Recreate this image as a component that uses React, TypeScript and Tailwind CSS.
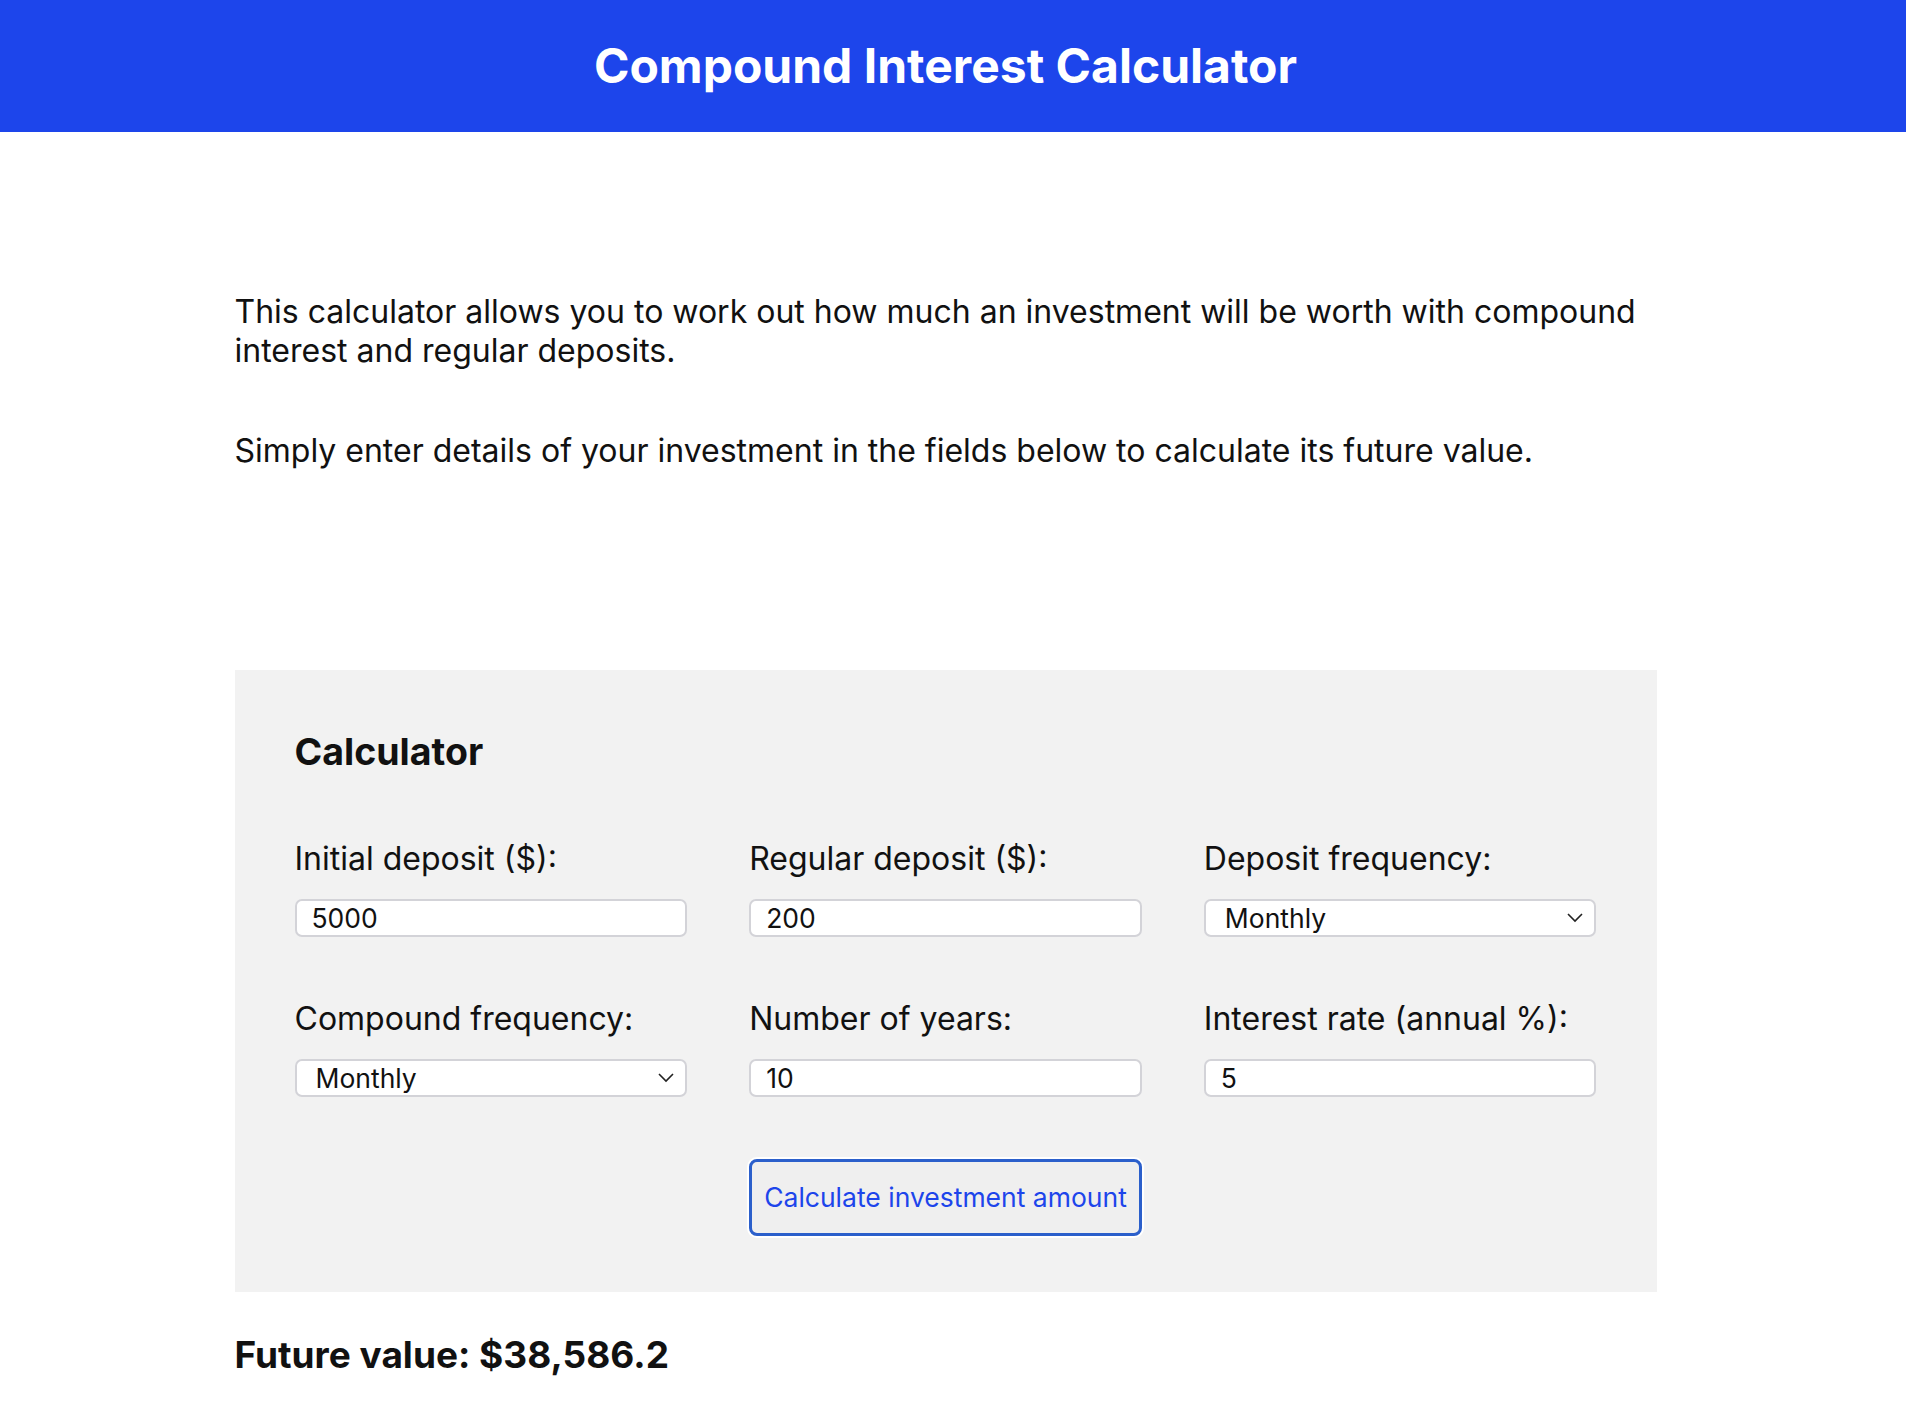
import React from "react";

const font = { fontFamily: "Inter, 'Noto Sans', sans-serif" };

const Field: React.FunctionComponent<{ label: string; value: string; select?: boolean }> = ({ label, value, select }) => (
    <div className="flex flex-col">
        <label className="text-[32px] leading-[39px] text-[#111]">{label}</label>
        {select ? (
            <div className="relative mt-[21px]">
                <select
                    defaultValue={value}
                    className="w-full h-[38px] appearance-none rounded-[7px] border-2 border-[#d3d3d8] bg-white pl-[19px] text-[26.5px] leading-[32px] text-[#111] outline-none"
                >
                    <option>Daily</option>
                    <option>Weekly</option>
                    <option>Monthly</option>
                    <option>Quarterly</option>
                    <option>Annually</option>
                </select>
                <svg className="absolute right-[12px] top-[12px] pointer-events-none" width="18" height="12" viewBox="0 0 18 12" fill="none">
                    <path d="M2 3l7 7 7-7" stroke="#222" strokeWidth="1.6" />
                </svg>
            </div>
        ) : (
            <input
                defaultValue={value}
                className="mt-[21px] w-full h-[38px] rounded-[7px] border-2 border-[#d3d3d8] bg-white px-[15px] text-[26.5px] leading-[32px] text-[#111] outline-none"
            />
        )}
    </div>
);

export default function App() {
    return (
        <div className="min-h-[1416px] w-full bg-white" style={font}>
            <header className="h-[132px] bg-[#1d45eb] flex items-center justify-center pr-[15px]">
                <h1 className="text-[48px] font-bold text-white">Compound Interest Calculator</h1>
            </header>

            <div className="w-[1891px]">
                <main className="w-[1422px] mx-auto pt-[160px] text-[#111]">
                    <p className="text-[32px] leading-[39px]">
                        This calculator allows you to work out how much an investment will be worth with compound interest and regular deposits.
                    </p>
                    <p className="mt-[61px] text-[32px] leading-[39px]">
                        Simply enter details of your investment in the fields below to calculate its future value.
                    </p>

                    <section className="mt-[200px] bg-[#f2f2f2] px-[60px] pt-[62px] pb-[56px]">
                        <h2 className="text-[37.5px] leading-[40px] font-bold">Calculator</h2>
                        <div className="mt-[67px] grid grid-cols-3 gap-x-[62px] gap-y-[62px]">
                            <Field label="Initial deposit ($):" value="5000" />
                            <Field label="Regular deposit ($):" value="200" />
                            <Field label="Deposit frequency:" value="Monthly" select />
                            <Field label="Compound frequency:" value="Monthly" select />
                            <Field label="Number of years:" value="10" />
                            <Field label="Interest rate (annual %):" value="5" />
                            <div />
                            <button className="h-[77px] rounded-[8px] border-[3px] border-[#2b5fcb] bg-[#efefef] text-[26.5px] text-[#1d45eb] shadow-[0_0_0_2px_#ffffff]">
                                Calculate investment amount
                            </button>
                        </div>
                    </section>

                    <p className="mt-[43px] text-[37px] leading-[40px] font-bold">Future value: $38,586.2</p>
                </main>
            </div>
        </div>
    );
}
